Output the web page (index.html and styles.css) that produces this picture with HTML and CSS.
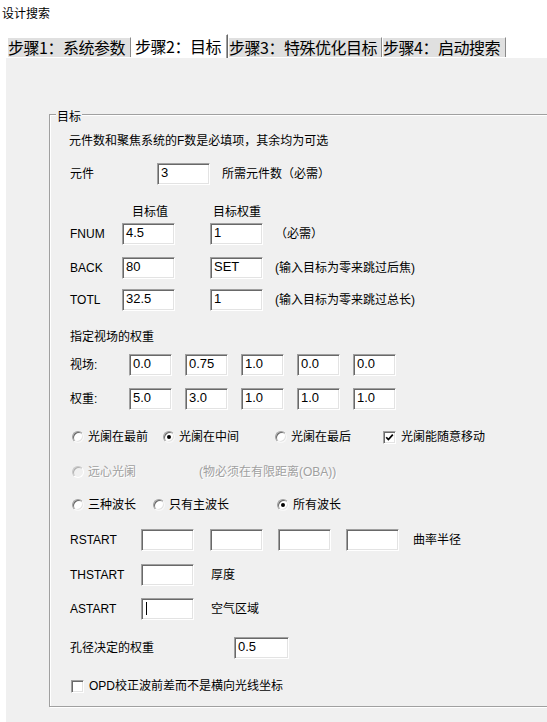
FILE: index.html
```html
<!DOCTYPE html>
<html lang="zh-CN">
<head>
<meta charset="utf-8">
<title>设计搜索</title>
<link rel="stylesheet" href="styles.css">
</head>
<body>
<div class="titlebar">设计搜索</div>
<div class="tabs">
  <div class="tab tab-1">步骤1：系统参数</div>
  <div class="tab tab-2 active">步骤2：目标</div>
  <div class="tab tab-3">步骤3：特殊优化目标</div>
  <div class="tab tab-4">步骤4：启动搜索</div>
</div>
<div class="panel">
  <div class="group">
    <div class="legend">目标</div>

    <div class="row t gap-18 intro">元件数和聚焦系统的F数是必填项，其余均为可选</div>

    <div class="row gap-14">
      <span class="lbl w-87">元件</span>
      <div class="field">3</div>
      <span class="note">所需元件数（必需）</span>
    </div>

    <div class="row t gap-19">
      <span class="lbl w-62"></span>
      <span class="lbl w-81">目标值</span>
      <span class="lbl">目标权重</span>
    </div>

    <div class="row gap-3">
      <span class="lbl w-52">FNUM</span>
      <div class="field">4.5</div>
      <div class="field ml-35">1</div>
      <span class="note">（必需）</span>
    </div>

    <div class="row gap-12">
      <span class="lbl w-52">BACK</span>
      <div class="field">80</div>
      <div class="field ml-35">SET</div>
      <span class="note">(输入目标为零来跳过后焦)</span>
    </div>

    <div class="row gap-10">
      <span class="lbl w-52">TOTL</span>
      <div class="field">32.5</div>
      <div class="field ml-35">1</div>
      <span class="note">(输入目标为零来跳过总长)</span>
    </div>

    <div class="row t gap-18">指定视场的权重</div>

    <div class="row gap-9 fields-5">
      <span class="lbl w-59">视场:</span>
      <div class="field small">0.0</div>
      <div class="field small">0.75</div>
      <div class="field small">1.0</div>
      <div class="field small">0.0</div>
      <div class="field small">0.0</div>
    </div>

    <div class="row gap-12 fields-5">
      <span class="lbl w-59">权重:</span>
      <div class="field small">5.0</div>
      <div class="field small">3.0</div>
      <div class="field small">1.0</div>
      <div class="field small">1.0</div>
      <div class="field small">1.0</div>
    </div>

    <div class="row t gap-19 opts">
      <label class="opt w-91"><span class="radio"></span>光阑在最前</label>
      <label class="opt w-112"><span class="radio on"></span>光阑在中间</label>
      <label class="opt w-108"><span class="radio"></span>光阑在最后</label>
      <label class="opt"><span class="check on"><svg viewBox="0 0 9 9" width="9" height="9"><polyline points="1.2,4.2 3.4,6.6 7.8,1.6" fill="none" stroke="#000" stroke-width="1.7"/></svg></span>光阑能随意移动</label>
    </div>

    <div class="row t gap-19 opts disabled">
      <label class="opt w-127"><span class="radio"></span>远心光阑</label>
      <span>(物必须在有限距离(OBA))</span>
    </div>

    <div class="row t gap-17 opts">
      <label class="opt w-81"><span class="radio"></span>三种波长</label>
      <label class="opt w-124"><span class="radio"></span>只有主波长</label>
      <label class="opt"><span class="radio on"></span>所有波长</label>
    </div>

    <div class="row gap-16 start">
      <span class="lbl w-71">RSTART</span>
      <div class="field"></div>
      <div class="field"></div>
      <div class="field"></div>
      <div class="field"></div>
      <span class="note">曲率半径</span>
    </div>

    <div class="row gap-13 start">
      <span class="lbl w-71">THSTART</span>
      <div class="field"></div>
      <span class="note wide">厚度</span>
    </div>

    <div class="row gap-12 start">
      <span class="lbl w-71">ASTART</span>
      <div class="field"><span class="caret"></span></div>
      <span class="note wide">空气区域</span>
    </div>

    <div class="row gap-17">
      <span class="lbl w-164">孔径决定的权重</span>
      <div class="field w-55">0.5</div>
    </div>

    <div class="row t gap-19 opts">
      <label class="opt chk-opt"><span class="check"></span>OPD校正波前差而不是横向光线坐标</label>
    </div>
  </div>
</div>
</body>
</html>
```

FILE: styles.css
```css
html, body {
  margin: 0;
  padding: 0;
}

body {
  width: 547px;
  height: 722px;
  overflow: hidden;
  background: #ffffff;
  color: #000;
  font-family: "Liberation Sans", "Noto Sans CJK SC", sans-serif;
  font-size: 12px;
  line-height: 16px;
}

.titlebar {
  height: 28px;
  line-height: 28px;
  padding-left: 2px;
}

/* tab strip */
.tabs {
  display: flex;
  align-items: flex-end;
  height: 29px;
  padding-left: 7px;
}

.tab {
  flex: none;
  box-sizing: border-box;
  height: 20px;
  background: #e0e0e0;
  border-left: 1px solid #fff;
  border-top: 1px solid #fff;
  border-right: 1px solid #8a8a8a;
  font-family: "Noto Sans CJK SC", sans-serif;
  font-size: 16px;
  line-height: 18px;
  white-space: nowrap;
  letter-spacing: -0.5px;
}

.tab-1 { width: 124px; }
.tab-3 { width: 154px; }
.tab-4 { width: 124px; }

.tab-2 {
  width: 97px;
  height: 24px;
  line-height: 22px;
  padding-left: 3px;
  margin-bottom: -1px;
  background: #fff;
  position: relative;
  z-index: 1;
  border-right: 1px solid #696969;
  box-shadow: inset -1px 0 #a0a0a0;
}

/* panel */
.panel {
  margin-left: 5px;
  height: 720px;
  border-top: 1px solid #fff;
  border-left: 1px solid #fff;
  background: #f0f0f0;
  padding: 56px 0 0 43px;
}

.group {
  width: 600px;
  border: 1px solid #a0a0a0;
  box-shadow: inset 1px 1px #fff, 1px 1px #fff;
  padding: 0 0 12px 20px;
}

/* caption sits on the top border; negative margins keep it out of the row flow */
.legend {
  width: fit-content;
  margin: -6px 0 -10px -14px;
  padding: 0 1px;
  background: #f0f0f0;
  line-height: 16px;
}

/* rows */
.row {
  display: flex;
  align-items: center;
  height: 22px;
  white-space: nowrap;
}

.row.t { height: 16px; }

.gap-3 { margin-top: 3px; }
.gap-9 { margin-top: 9px; }
.gap-10 { margin-top: 10px; }
.gap-12 { margin-top: 12px; }
.gap-13 { margin-top: 13px; }
.gap-14 { margin-top: 14px; }
.gap-16 { margin-top: 16px; }
.gap-17 { margin-top: 17px; }
.gap-18 { margin-top: 18px; }
.gap-19 { margin-top: 19px; }

.intro { margin-left: -1px; }

.lbl { flex: none; }
.w-52 { width: 52px; }
.w-59 { width: 59px; }
.w-62 { width: 62px; }
.w-71 { width: 71px; }
.w-81 { width: 81px; }
.w-87 { width: 87px; }
.w-91 { width: 91px; }
.w-108 { width: 108px; }
.w-112 { width: 112px; }
.w-124 { width: 124px; }
.w-127 { width: 127px; }
.w-164 { width: 164px; }

.note { margin-left: 12px; }

/* edit fields */
.field {
  flex: none;
  box-sizing: border-box;
  width: 53px;
  height: 22px;
  background: #fff;
  border: 1px solid;
  border-color: #a0a0a0 #fff #fff #a0a0a0;
  box-shadow: inset 1px 1px #696969, inset -1px -1px #e3e3e3;
  padding: 1px 0 0 3px;
  font-family: "Liberation Sans", sans-serif;
  font-size: 13px;
  line-height: 16px;
}

.field.w-55 { width: 55px; }
.ml-35 { margin-left: 35px; }

.fields-5 .field.small { width: 43px; margin-right: 13px; }

.start .field + .field { margin-left: 15px; }
.start .field:nth-of-type(2) { margin-left: 16px; }
.start .note { margin-left: 14px; }
.start .note.wide { margin-left: 17px; }

.caret {
  display: block;
  width: 1px;
  height: 13px;
  margin: 2px 0 0 1px;
  background: #000;
}

/* radios & checkboxes */
.opts { margin-left: 2px; }

.opt {
  flex: none;
  display: flex;
  align-items: center;
}

.radio {
  flex: none;
  box-sizing: border-box;
  width: 12px;
  height: 12px;
  margin-right: 4px;
  border-radius: 50%;
  background: #fff;
  border: 1px solid;
  border-color: #a0a0a0 #f8f8f8 #f8f8f8 #a0a0a0;
  box-shadow: inset 1px 1px #696969, inset -1px -1px #e3e3e3;
  display: flex;
  align-items: center;
  justify-content: center;
}

.radio.on::after {
  content: "";
  width: 4px;
  height: 4px;
  border-radius: 50%;
  background: #000;
}

.check {
  flex: none;
  box-sizing: border-box;
  width: 13px;
  height: 13px;
  margin-right: 5px;
  background: #fff;
  border: 1px solid;
  border-color: #a0a0a0 #fff #fff #a0a0a0;
  box-shadow: inset 1px 1px #696969, inset -1px -1px #e3e3e3;
  display: flex;
  align-items: center;
  justify-content: center;
}

.check svg { display: block; }

.chk-opt { margin-left: -1px; }

.disabled {
  color: #a0a0a0;
  text-shadow: 1px 1px 0 #fff;
}

.disabled .radio {
  background: #f0f0f0;
  border-color: #c8c8c8 #fff #fff #c8c8c8;
  box-shadow: inset 1px 1px #b0b0b0;
}
```
